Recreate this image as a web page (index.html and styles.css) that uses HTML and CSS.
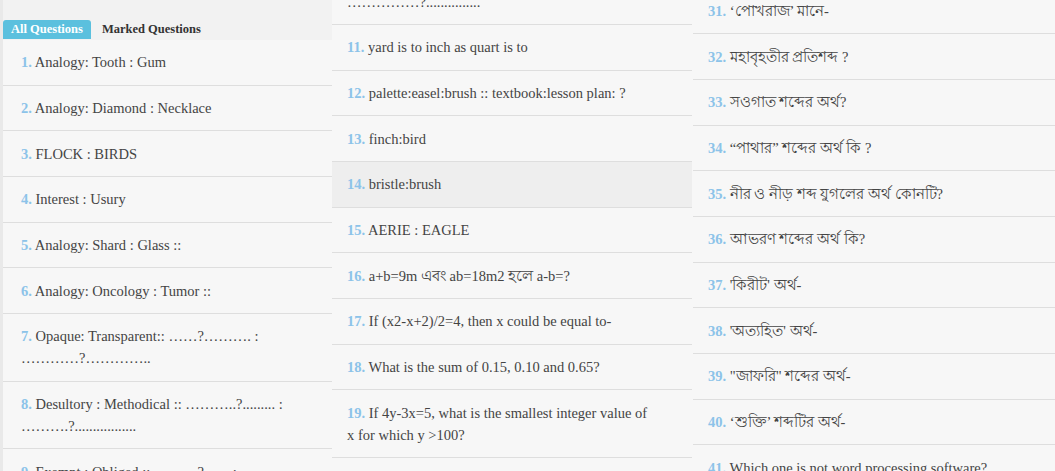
FILE: index.html
```html
<!DOCTYPE html>
<html lang="en">
<head>
<meta charset="utf-8">
<title>Questions</title>
<link rel="stylesheet" href="styles.css">
</head>
<body>
<div class="board">
  <div class="col col-left">
    <div class="tabs">
      <span class="tab active">All Questions</span>
      <span class="tab">Marked Questions</span>
    </div>
    <ul class="qlist">
      <li class="q"><span class="num">1.</span> Analogy: Tooth : Gum</li>
      <li class="q"><span class="num">2.</span> Analogy: Diamond : Necklace</li>
      <li class="q"><span class="num">3.</span> FLOCK : BIRDS</li>
      <li class="q"><span class="num">4.</span> Interest : Usury</li>
      <li class="q"><span class="num">5.</span> Analogy: Shard : Glass ::</li>
      <li class="q"><span class="num">6.</span> Analogy: Oncology : Tumor ::</li>
      <li class="q"><span class="num">7.</span> Opaque: Transparent:: ……?………. : …………?…………..</li>
      <li class="q"><span class="num">8.</span> Desultory : Methodical :: ………..?......... : ……….?.................</li>
      <li class="q"><span class="num">9.</span> Exempt : Obliged :: ………?....... : ……….?..........</li>
    </ul>
  </div>
  <div class="col col-mid">
    <ul class="qlist">
      <li class="q">……………?...............</li>
      <li class="q"><span class="num">11.</span> yard is to inch as quart is to</li>
      <li class="q"><span class="num">12.</span> palette:easel:brush :: textbook:lesson plan: ?</li>
      <li class="q"><span class="num">13.</span> finch:bird</li>
      <li class="q q-hover"><span class="num">14.</span> bristle:brush</li>
      <li class="q"><span class="num">15.</span> AERIE : EAGLE</li>
      <li class="q"><span class="num">16.</span> a+b=9m এবং ab=18m2 হলে a-b=?</li>
      <li class="q"><span class="num">17.</span> If (x2-x+2)/2=4, then x could be equal to-</li>
      <li class="q"><span class="num">18.</span> What is the sum of 0.15, 0.10 and 0.65?</li>
      <li class="q"><span class="num">19.</span> If 4y-3x=5, what is the smallest integer value of x for which y &gt;100?</li>
      <li class="q"><span class="num">20.</span> If x+y=7 and x-y=3, then x=?</li>
    </ul>
  </div>
  <div class="col col-right">
    <ul class="qlist">
      <li class="q"><span class="num">31.</span> ‘পোখরাজ’ মানে-</li>
      <li class="q"><span class="num">32.</span> মহাবৃহতীর প্রতিশব্দ ?</li>
      <li class="q"><span class="num">33.</span> সওগাত শব্দের অর্থ?</li>
      <li class="q"><span class="num">34.</span> “পাথার” শব্দের অর্থ কি ?</li>
      <li class="q"><span class="num">35.</span> নীর ও নীড় শব্দ যুগলের অর্থ কোনটি?</li>
      <li class="q"><span class="num">36.</span> আভরণ শব্দের অর্থ কি?</li>
      <li class="q"><span class="num">37.</span> 'কিরীট' অর্থ-</li>
      <li class="q"><span class="num">38.</span> 'অত্যহিত' অর্থ-</li>
      <li class="q"><span class="num">39.</span> "জাফরি" শব্দের অর্থ-</li>
      <li class="q"><span class="num">40.</span> ‘শুক্তি’ শব্দটির অর্থ-</li>
      <li class="q"><span class="num">41.</span> Which one is not word processing software?</li>
    </ul>
  </div>
</div>
</body>
</html>
```

FILE: styles.css
```css
html, body {
  margin: 0;
  padding: 0;
}

body {
  background: #f7f7f7;
  font-family: "Liberation Serif", "Times New Roman", serif;
  font-size: 14.5px;
  color: #444444;
  height: 471px;
  overflow: hidden;
}

.board {
  display: flex;
  align-items: flex-start;
}

.col {
  flex: none;
}

.col-left {
  width: 329px;
  border-left: 3px solid #e9e9e9;
}

.col-mid {
  width: 360px;
  margin-top: -20.67px;
}

.col-right {
  width: 362px;
  margin-top: -11.33px;
  padding-left: 1px;
}

.tabs {
  height: 40px;
  box-sizing: border-box;
  background: #f2f2f2;
  display: flex;
  align-items: flex-end;
  padding-bottom: 1px;
}

.tab {
  font-weight: bold;
  font-size: 12.5px;
  line-height: 19px;
  height: 19px;
  padding: 0 6px;
  color: #333333;
}

.tab.active {
  background: #5bc0de;
  color: #ffffff;
  border-radius: 3px 3px 0 0;
  padding: 0 8px;
  margin-right: 5px;
}

.qlist {
  list-style: none;
  margin: 0;
  padding: 0;
}

.q {
  padding: 11.33px 40px 11.33px 15px;
  line-height: 22px;
  border-bottom: 1px solid #dedede;
}

.col-left .q {
  padding-left: 18px;
  padding-right: 20px;
}

.q-hover {
  background: #eeeeee;
}

.num {
  color: #8cc3e9;
  font-weight: bold;
}
```
